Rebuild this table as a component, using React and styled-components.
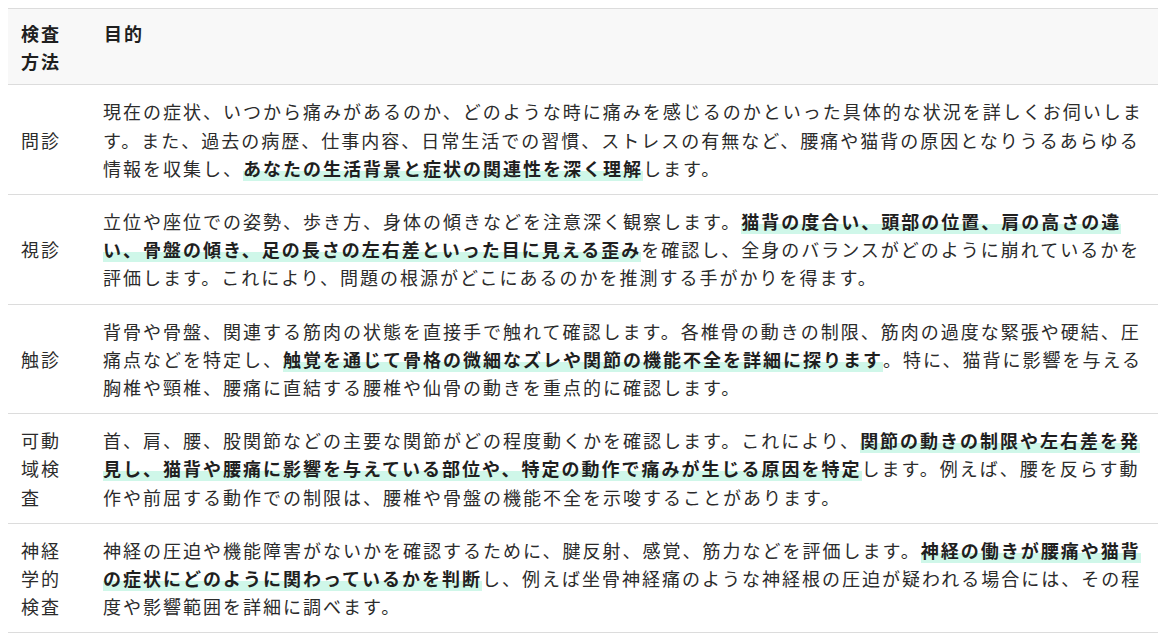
import React from "react";
import styled, { createGlobalStyle } from "styled-components";

const rows = [
  {
    method: "問診",
    parts: [
      "現在の症状、いつから痛みがあるのか、どのような時に痛みを感じるのかといった具体的な状況を詳しくお伺いします。また、過去の病歴、仕事内容、日常生活での習慣、ストレスの有無など、腰痛や猫背の原因となりうるあらゆる情報を収集し、",
      { mark: "あなたの生活背景と症状の関連性を深く理解" },
      "します。",
    ],
  },
  {
    method: "視診",
    parts: [
      "立位や座位での姿勢、歩き方、身体の傾きなどを注意深く観察します。",
      { mark: "猫背の度合い、頭部の位置、肩の高さの違い、骨盤の傾き、足の長さの左右差といった目に見える歪み" },
      "を確認し、全身のバランスがどのように崩れているかを評価します。これにより、問題の根源がどこにあるのかを推測する手がかりを得ます。",
    ],
  },
  {
    method: "触診",
    parts: [
      "背骨や骨盤、関連する筋肉の状態を直接手で触れて確認します。各椎骨の動きの制限、筋肉の過度な緊張や硬結、圧痛点などを特定し、",
      { mark: "触覚を通じて骨格の微細なズレや関節の機能不全を詳細に探ります" },
      "。特に、猫背に影響を与える胸椎や頸椎、腰痛に直結する腰椎や仙骨の動きを重点的に確認します。",
    ],
  },
  {
    method: "可動域検査",
    parts: [
      "首、肩、腰、股関節などの主要な関節がどの程度動くかを確認します。これにより、",
      { mark: "関節の動きの制限や左右差を発見し、猫背や腰痛に影響を与えている部位や、特定の動作で痛みが生じる原因を特定" },
      "します。例えば、腰を反らす動作や前屈する動作での制限は、腰椎や骨盤の機能不全を示唆することがあります。",
    ],
  },
  {
    method: "神経学的検査",
    parts: [
      "神経の圧迫や機能障害がないかを確認するために、腱反射、感覚、筋力などを評価します。",
      { mark: "神経の働きが腰痛や猫背の症状にどのように関わっているかを判断" },
      "し、例えば坐骨神経痛のような神経根の圧迫が疑われる場合には、その程度や影響範囲を詳細に調べます。",
    ],
  },
];

const GlobalStyle = createGlobalStyle`
  body {
    margin: 8px;
    background: #fff;
    font-family: "Noto Sans CJK JP", "Noto Sans", sans-serif;
    color: #2b2b2b;
  }
`;

const Table = styled.table`
  width: 100%;
  border-collapse: collapse;
  font-size: 18px;
  line-height: 28.2px;
  letter-spacing: 2px;
`;

const HeadRow = styled.tr`
  background: #f8f8f8;
  border-top: 1px solid #dcdcdc;
  border-bottom: 1px solid #dcdcdc;
`;

const Th = styled.th`
  padding: 10px 12px 9px 13px;
  text-align: left;
  vertical-align: top;
  font-weight: 700;
  color: #1f1f1f;
  width: ${(p) => (p.$narrow ? "58px" : "auto")};
`;

const Row = styled.tr`
  border-bottom: 1px solid #dcdcdc;
`;

const Td = styled.td`
  padding: 12px 12px 12px ${(p) => (p.$method ? "13px" : "12px")};
  vertical-align: middle;
  text-align: left;
  color: #2b2b2b;
`;

const Mark = styled.strong`
  font-weight: 700;
  color: #1f1f1f;
  background: linear-gradient(transparent 60%, #cff7e9 60%);
`;

export default function App() {
  return (
    <>
      <GlobalStyle />
      <Table>
        <thead>
          <HeadRow>
            <Th $narrow>検査方法</Th>
            <Th>目的</Th>
          </HeadRow>
        </thead>
        <tbody>
          {rows.map((r) => (
            <Row key={r.method}>
              <Td $method>{r.method}</Td>
              <Td>
                {r.parts.map((p, i) =>
                  typeof p === "string" ? p : <Mark key={i}>{p.mark}</Mark>
                )}
              </Td>
            </Row>
          ))}
        </tbody>
      </Table>
    </>
  );
}
